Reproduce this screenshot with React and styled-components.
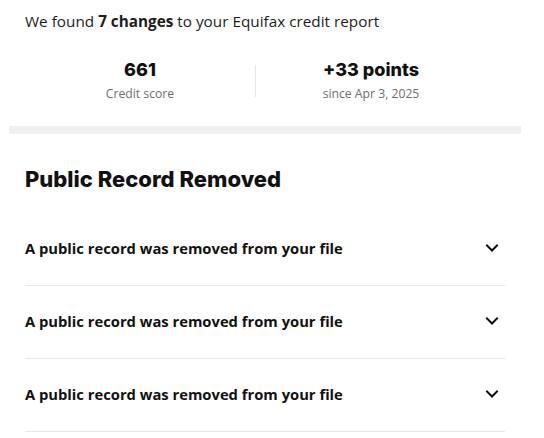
import React from 'react'
import styled, { createGlobalStyle } from 'styled-components'

const GlobalStyle = createGlobalStyle`
  body {
    margin: 0;
    background: #fff;
    font-family: "Open Sans", "Liberation Sans", sans-serif;
    color: #1a1a1a;
  }
`

const Page = styled.div`
  width: 512px;
  margin-left: 9px;
  padding-top: 10px;
`

const Intro = styled.p`
  margin: 0;
  padding: 0 16px;
  font-size: 15.3px;
  line-height: 22px;
  color: #1d1d1d;

  strong {
    font-weight: 700;
  }
`

const Stats = styled.div`
  display: grid;
  grid-template-columns: 230px 1px 230px;
  align-items: center;
  margin: 28px 0 0 16px;
`

const Stat = styled.div`
  display: flex;
  flex-direction: column;
  align-items: center;
`

const StatDivider = styled.div`
  width: 1px;
  height: 32px;
  background: #e4e5e6;
`

const StatValue = styled.div`
  font-family: Inter, "Liberation Sans", sans-serif;
  font-size: 18px;
  font-weight: 800;
  line-height: 20px;
  color: #111;
`

const StatLabel = styled.div`
  margin-top: 6px;
  font-size: 12.2px;
  line-height: 16px;
  color: #6b6e70;
`

const Band = styled.div`
  height: 8px;
  background: #eff0f1;
  margin-top: 24px;
`

const Section = styled.section`
  padding: 0 16px;
`

const Heading = styled.h2`
  margin: 31px 0 20px;
  font-family: Inter, "Liberation Sans", sans-serif;
  font-size: 22px;
  font-weight: 800;
  line-height: 28px;
  color: #111;
`

const Row = styled.div`
  display: flex;
  align-items: center;
  justify-content: space-between;
  height: 73px;
  padding-bottom: 3px;
  border-bottom: 1px solid #e6e7e8;
  box-sizing: border-box;
`

const RowTitle = styled.span`
  font-size: 14.75px;
  font-weight: 700;
  color: #111;
`

const Chevron = styled.svg`
  width: 14px;
  height: 14px;
  margin-right: 6px;
`

const ChevronIcon = () => (
  <Chevron viewBox="0 0 14 14" fill="none">
    <path d="M2 4.5l5 5 5-5" stroke="#111" strokeWidth="2" strokeLinecap="square" />
  </Chevron>
)

const rows = [
  'A public record was removed from your file',
  'A public record was removed from your file',
  'A public record was removed from your file',
]

export default function App() {
  return (
    <>
      <GlobalStyle />
      <Page>
        <Intro>
          We found <strong>7 changes</strong> to your Equifax credit report
        </Intro>
        <Stats>
          <Stat>
            <StatValue>661</StatValue>
            <StatLabel>Credit score</StatLabel>
          </Stat>
          <StatDivider />
          <Stat>
            <StatValue>+33 points</StatValue>
            <StatLabel>since Apr 3, 2025</StatLabel>
          </Stat>
        </Stats>
        <Band />
        <Section>
          <Heading>Public Record Removed</Heading>
          {rows.map((r, i) => (
            <Row key={i}>
              <RowTitle>{r}</RowTitle>
              <ChevronIcon />
            </Row>
          ))}
        </Section>
      </Page>
    </>
  )
}
